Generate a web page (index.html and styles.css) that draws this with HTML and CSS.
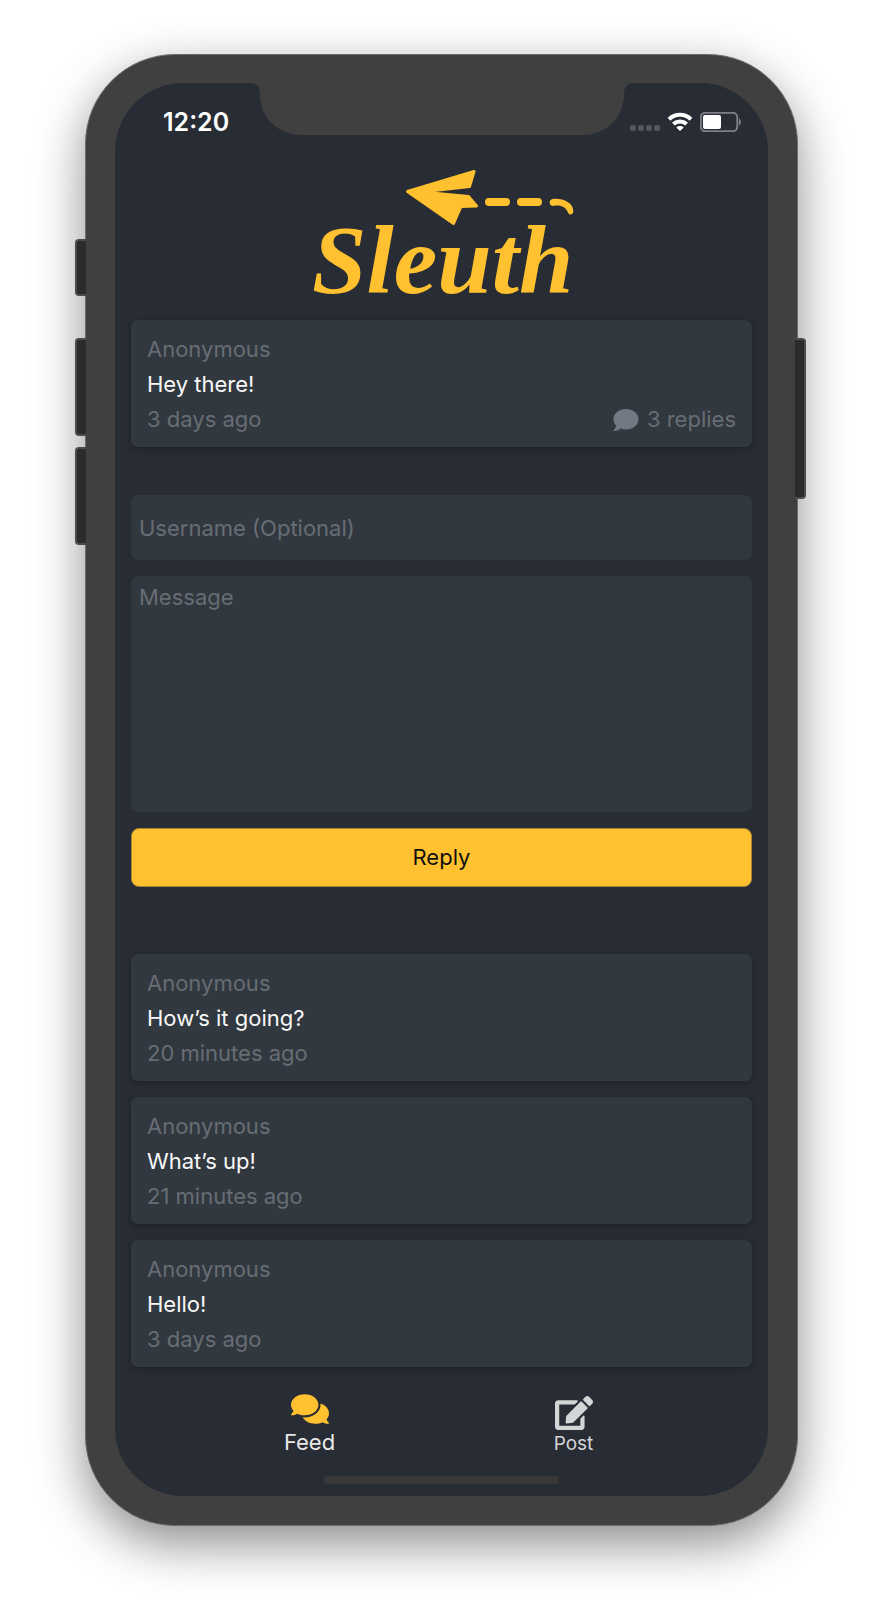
FILE: index.html
```html
<!DOCTYPE html>
<html lang="en">
<head>
<meta charset="utf-8">
<meta name="viewport" content="width=device-width, initial-scale=1">
<title>Sleuth</title>
<link rel="stylesheet" href="styles.css">
</head>
<body>
<div class="phone">
  <span class="key key-mute"></span>
  <span class="key key-up"></span>
  <span class="key key-down"></span>
  <span class="key key-power"></span>
  <div class="screen">
    <svg class="notch" viewBox="0 0 384 52" aria-hidden="true"><path d="M0 0H384C377 0 374 4 374 11C374 34 357 52 332 52H52C27 52 10 34 10 11C10 4 7 0 0 0Z"/></svg>
    <div class="status">
      <time class="clock">12:20</time>
      <div class="indicators">
        <svg class="signal" viewBox="0 0 30 20" aria-hidden="true"><rect x="0" y="13" width="6" height="6" rx="2"/><rect x="8" y="13" width="6" height="6" rx="2"/><rect x="16" y="13" width="6" height="6" rx="2"/><rect x="24" y="13" width="6" height="6" rx="2"/></svg>
        <svg class="wifi" viewBox="0 0 26 20" aria-hidden="true"><path class="arc" d="M2 7.200A16 16 0 0 1 24 7.200M6.400 12A9.800 9.800 0 0 1 19.600 12"/><path d="M13 19L9.300 15.400A5.400 5.400 0 0 1 16.700 15.400Z"/></svg>
        <svg class="battery" viewBox="0 0 42 20" aria-hidden="true"><rect class="case" x=".8" y=".8" width="36.500" height="18.400" rx="4.500"/><rect class="charge" x="3" y="3" width="18" height="14" rx="2"/><path class="nub" d="M39 6.500C41.600 7.500 41.600 12.500 39 13.500Z"/></svg>
      </div>
    </div>

    <header class="brand">
      <svg class="logo" viewBox="302 160 280 140" role="img" aria-label="Sleuth">
        <path class="plane" d="M407.500 191.500L474 171.500L469.500 186.500L421 192L468.500 196.500L476.500 206L461 206.500L453.500 223.500Z"/>
        <path class="trail" d="M489 202H506M521 202H538"/>
        <path d="M549.700 203C549.400 200 552 198.800 554.500 198.800C564 198.500 572.800 203 573.300 210.500C573.500 215 569.500 216 568 212.500C566 207.500 561 204.800 554.500 205.800C552 206.300 550 205.500 549.700 203Z"/>
        <text class="wordmark" x="312" y="293">Sleuth</text>
      </svg>
    </header>

    <main class="content">
      <article class="card">
        <p class="meta">Anonymous</p>
        <p>Hey there!</p>
        <div class="card-foot">
          <p class="meta">3 days ago</p>
          <p class="meta replies"><svg class="bubble" viewBox="0 32 512 448" aria-hidden="true"><path d="M256 32C114.600 32 0 125.100 0 240c0 49.600 21.400 95 57 130.700C44.500 421.100 2.700 466 2.200 466.500c-2.200 2.300-2.800 5.700-1.500 8.700S4.800 480 8 480c66.300 0 116-31.800 140.600-51.400 32.700 12.300 69 19.400 107.400 19.400 141.400 0 256-93.100 256-208S397.400 32 256 32z"/></svg>3 replies</p>
        </div>
      </article>

      <form class="reply-form">
        <input class="field" type="text" placeholder="Username (Optional)" aria-label="Username (Optional)">
        <textarea class="field message" placeholder="Message" aria-label="Message"></textarea>
        <button class="submit" type="button">Reply</button>
      </form>

      <section class="thread" aria-label="Replies">
        <article class="card">
          <p class="meta">Anonymous</p>
          <p>How’s it going?</p>
          <p class="meta">20 minutes ago</p>
        </article>
        <article class="card">
          <p class="meta">Anonymous</p>
          <p>What’s up!</p>
          <p class="meta">21 minutes ago</p>
        </article>
        <article class="card">
          <p class="meta">Anonymous</p>
          <p>Hello!</p>
          <p class="meta">3 days ago</p>
        </article>
      </section>
    </main>

    <nav class="tabs" aria-label="Main">
      <a class="tab active" href="#feed">
        <svg class="tab-icon" viewBox="0 0 576 512" aria-hidden="true"><path d="M416 192c0-88.400-93.100-160-208-160S0 103.600 0 192c0 34.300 14.100 65.900 38 92-13.400 30.200-35.500 54.200-35.800 54.500-2.200 2.300-2.800 5.700-1.500 8.700S4.800 352 8 352c36.600 0 66.900-12.300 88.700-25 32.200 15.700 70.300 25 111.300 25 114.900 0 208-71.600 208-160zm122 220c23.900-26 38-57.700 38-92 0-66.900-53.500-124.200-129.300-148.100.9 6.600 1.300 13.300 1.300 20.100 0 105.900-107.700 192-240 192-10.800 0-21.300-.8-31.700-1.900C207.800 439.600 281.800 480 368 480c41 0 79.100-9.200 111.300-25 21.800 12.700 52.100 25 88.700 25 3.200 0 6.100-1.900 7.300-4.800 1.300-2.900.7-6.300-1.500-8.700-.3-.3-22.400-24.200-35.800-54.500z"/></svg>
        Feed
      </a>
      <a class="tab" href="#post">
        <svg class="tab-icon" viewBox="0 0 576 512" aria-hidden="true"><path d="M402.600 83.200l90.200 90.200c3.800 3.800 3.800 10 0 13.800L274.400 405.600l-92.800 10.300c-12.400 1.400-22.900-9.100-21.500-21.500l10.300-92.800L388.800 83.200c3.800-3.800 10-3.800 13.800 0zm162-22.900l-48.800-48.800c-15.200-15.200-39.900-15.200-55.200 0l-35.400 35.400c-3.800 3.800-3.800 10 0 13.800l90.200 90.200c3.800 3.800 10 3.800 13.800 0l35.400-35.400c15.200-15.300 15.200-40 0-55.200zM384 346.200V448H64V128h229.800c3.200 0 6.200-1.300 8.500-3.500l40-40c7.600-7.600 2.200-20.500-8.500-20.500H48C21.500 64 0 85.500 0 112v352c0 26.500 21.500 48 48 48h352c26.500 0 48-21.500 48-48V306.200c0-10.700-12.900-16-20.500-8.500l-40 40c-2.200 2.300-3.500 5.300-3.500 8.500z"/></svg>
        Post
      </a>
    </nav>
    <div class="home-bar"></div>
  </div>
</div>
</body>
</html>
```

FILE: styles.css
```css
* {
  box-sizing: border-box;
}

body {
  margin: 0;
  padding: 54px 84px 84px 85px;
  background: #fff;
  color: #f8f8f8;
  font: 22px/35px Inter, "Liberation Sans", sans-serif;
}

p {
  margin: 0;
}

.phone {
  position: relative;
  padding: 28px 29px 29px;
  border: 1px solid #6c6e6e;
  border-radius: 90px;
  background: #404040;
  box-shadow: 0 18px 50px rgba(0, 0, 0, 0.45);
}

.key {
  position: absolute;
  left: -11px;
  width: 11px;
  border: 2px solid #4b4b4b;
  border-right: 0;
  border-radius: 4px 0 0 4px;
  background: #2b2b2b;
}

.key-mute {
  top: 184px;
  height: 57px;
}

.key-up {
  top: 283px;
  height: 98px;
}

.key-down {
  top: 392px;
  height: 98px;
}

.key-power {
  top: 283px;
  right: -9px;
  left: auto;
  height: 161px;
  border-right: 2px solid #4b4b4b;
  border-left: 0;
  border-radius: 0 4px 4px 0;
}

.screen {
  position: relative;
  display: flex;
  flex-direction: column;
  padding: 23px 0 12px;
  border-radius: 68px;
  background: #282c34;
}

.notch {
  position: absolute;
  top: 0;
  left: 50%;
  width: 384px;
  height: 52px;
  transform: translateX(-50%);
  fill: #404040;
}

.status {
  display: flex;
  align-items: center;
  justify-content: space-between;
  height: 32px;
  padding: 0 26px 0 48px;
}

.clock {
  color: #fff;
  font-size: 25px;
  font-weight: 600;
}

.indicators {
  display: flex;
  gap: 7px;
}

.indicators svg {
  height: 20px;
}

.signal {
  width: 30px;
  fill: #54575e;
}

.wifi {
  width: 26px;
  fill: #fff;
}

.arc {
  fill: none;
  stroke: #fff;
  stroke-width: 4;
}

.battery {
  width: 42px;
}

.case {
  fill: none;
  stroke: #7c7f84;
  stroke-width: 2;
}

.charge {
  fill: #fff;
}

.nub {
  fill: #7c7f84;
}

.brand {
  display: flex;
  justify-content: center;
  padding: 22px 0 20px;
}

.logo {
  width: 280px;
  height: 140px;
  overflow: visible;
  fill: #ffc12f;
}

.plane {
  stroke: #ffc12f;
  stroke-width: 3;
  stroke-linejoin: round;
}

.trail {
  fill: none;
  stroke: #ffc12f;
  stroke-width: 8;
  stroke-linecap: round;
}

.wordmark {
  font: italic bold 98px "Brush Script MT", "Liberation Serif", serif;
}

.content {
  padding: 0 16px;
}

.card {
  padding: 12px 16px 10px;
  border-radius: 7px;
  background: #32383f;
  box-shadow: 0 2px 6px rgba(0, 0, 0, 0.25);
}

.meta {
  color: #676d74;
}

.card-foot {
  display: flex;
  justify-content: space-between;
}

.replies {
  display: flex;
  align-items: center;
  gap: 8px;
}

.bubble {
  width: 26px;
  height: 22px;
  fill: #727983;
}

.reply-form {
  display: flex;
  flex-direction: column;
  gap: 16px;
  padding: 48px 0 67px;
}

.field {
  width: 100%;
  height: 65px;
  padding: 4px 8px;
  border: 0;
  border-radius: 7px;
  background: #32383f;
  color: #f8f8f8;
  font: inherit;
}

.field::placeholder {
  color: #676d74;
  opacity: 1;
}

.message {
  height: 236px;
  resize: none;
}

.submit {
  height: 59px;
  border: 1px solid #a88535;
  border-radius: 8px;
  background: #ffc12f;
  color: #111;
  font: inherit;
}

.thread {
  display: flex;
  flex-direction: column;
  gap: 16px;
}

.tabs {
  display: grid;
  grid-template-columns: 264px 264px;
  justify-content: center;
  margin-top: 25px;
}

.tab {
  display: flex;
  flex-direction: column;
  align-items: center;
  justify-content: flex-end;
  height: 66px;
  color: #d4d5d7;
  font-size: 19px;
  line-height: 28px;
  text-decoration: none;
}

.tab-icon {
  width: 38px;
  height: 34px;
  fill: currentColor;
}

.active {
  color: #e8e8e8;
  font-size: 22px;
  line-height: 32px;
}

.active .tab-icon {
  fill: #ffc12f;
}

.home-bar {
  align-self: center;
  width: 36%;
  height: 8px;
  margin-top: 18px;
  border-radius: 4px;
  background: #383838;
}
```
